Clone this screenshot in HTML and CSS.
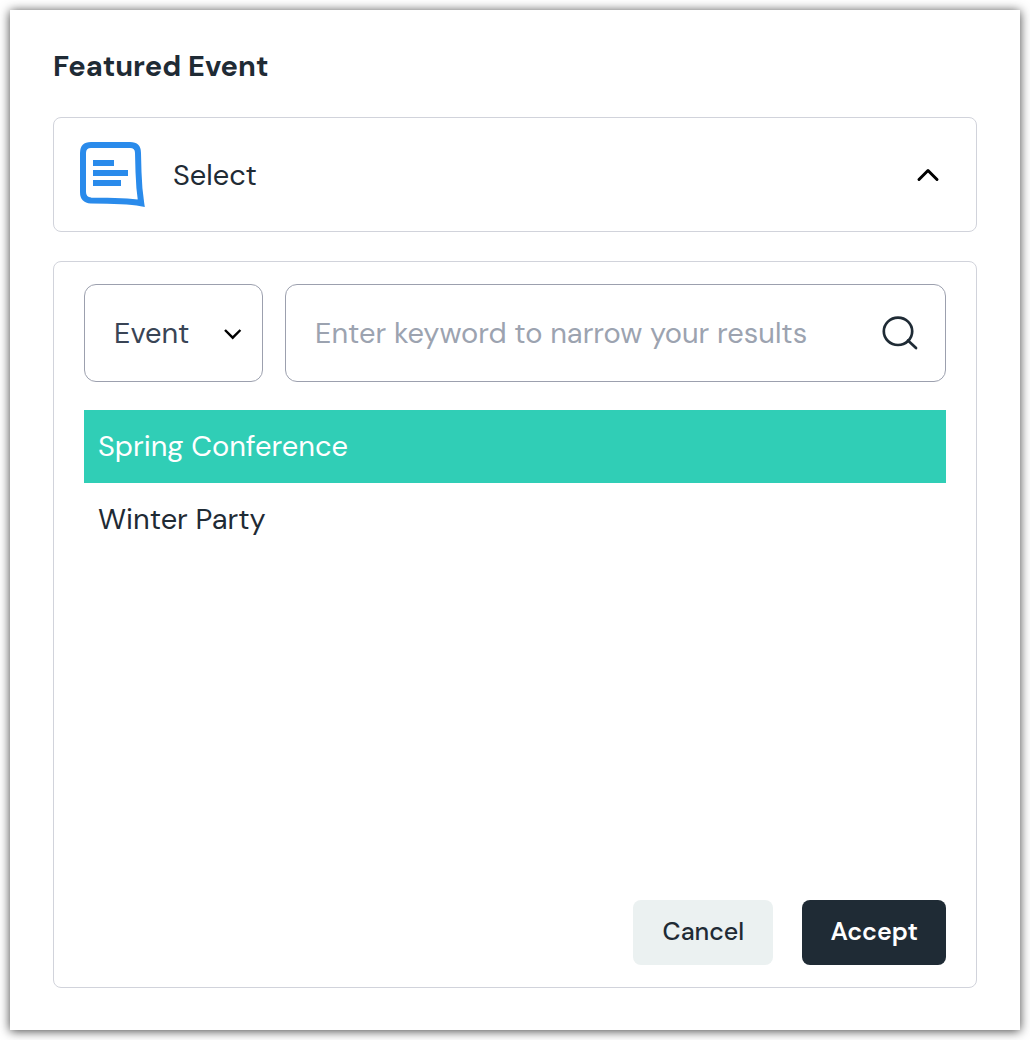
FILE: index.html
```html
<!DOCTYPE html>
<html lang="en">
<head>
<meta charset="utf-8">
<meta name="viewport" content="width=device-width, initial-scale=1">
<title>Featured Event</title>
<link rel="stylesheet" href="styles.css">
</head>
<body>
<main class="card">
  <h1 class="title">Featured Event</h1>
  <button class="picker" type="button" aria-expanded="true" aria-controls="event-panel">
    <svg class="picker-logo" width="66" height="66" viewBox="0 0 66 66" aria-hidden="true">
      <path d="M11 3H50Q58 3 58 11L58.500 30Q59 47 61.200 61.200Q46 58.500 11 58.500Q3 58 3 50V11Q3 3 11 3Z" fill="none" stroke="#2a8beb" stroke-width="6"/>
      <path d="M13 18H34V24H13ZM13 28H48V34H13ZM13 38H41V44H13Z" fill="#2a8beb"/>
    </svg>
    <span class="picker-label">Select</span>
    <svg class="picker-chevron" width="24" height="16" viewBox="0 0 24 16" aria-hidden="true">
      <path d="M3 12.500L12 3.500L21 12.500" fill="none" stroke="#000" stroke-width="3" stroke-linecap="round" stroke-linejoin="round"/>
    </svg>
  </button>

  <section class="panel" id="event-panel" aria-label="Choose an event">
    <div class="filters">
      <div class="type">
        <select class="type-select" aria-label="Content type">
          <option>Event</option>
        </select>
        <svg class="type-chevron" width="18" height="12" viewBox="0 0 18 12" aria-hidden="true">
          <path d="M1 2L8.700 9.700L16.400 2" fill="none" stroke="#000" stroke-width="2.400"/>
        </svg>
      </div>
      <label class="search">
        <input class="search-input" type="text" aria-label="Keyword" placeholder="Enter keyword to narrow your results">
        <svg class="search-icon" width="36" height="34" viewBox="0 0 36 34" aria-hidden="true">
          <ellipse cx="16" cy="15.300" rx="14.200" ry="13.700" fill="none" stroke="#1f2b35" stroke-width="2.700"/>
          <path d="M26 24.500L34 32" fill="none" stroke="#1f2b35" stroke-width="2.700" stroke-linecap="round"/>
        </svg>
      </label>
    </div>
    <ul class="results">
      <li><button class="result result-active" type="button">Spring Conference</button></li>
      <li><button class="result" type="button">Winter Party</button></li>
    </ul>
    <div class="actions">
      <button class="action action-cancel" type="button">Cancel</button>
      <button class="action action-accept" type="button">Accept</button>
    </div>
  </section>
</main>
</body>
</html>
```
FILE: styles.css
```css
* {
  box-sizing: border-box;
}

body {
  margin: 0;
  padding: 10px;
  background: #fff;
  color: #1f2b35;
  font-family: "DM Sans", Inter, "Liberation Sans", sans-serif;
  font-size: 29px;
  line-height: 36px;
}

button,
input,
select {
  font: inherit;
  color: inherit;
}

button {
  cursor: pointer;
}

.card {
  padding: 38px 43px 42px;
  background: #fff;
  box-shadow: 0 1px 10px rgba(0, 0, 0, 0.75);
}

.title {
  margin: 0 0 33px;
  font-size: 29px;
  font-weight: 700;
}

.picker {
  display: flex;
  align-items: center;
  width: 100%;
  height: 115px;
  padding: 0 36px 0 26px;
  border: 1px solid #d1d3db;
  border-radius: 8px;
  background: #fff;
  text-align: left;
}

.picker-label {
  flex: 1;
  margin-left: 27px;
}

.panel {
  display: flex;
  flex-direction: column;
  margin-top: 29px;
  padding: 22px 30px;
  border: 1px solid #d1d3db;
  border-radius: 8px;
}

.filters {
  display: flex;
  gap: 22px;
  height: 98px;
}

.type {
  position: relative;
  flex: none;
  width: 179px;
}

.type-select {
  width: 100%;
  height: 100%;
  padding: 0 48px 0 29px;
  border: 1px solid #9ca0ae;
  border-radius: 12px;
  appearance: none;
  background: transparent;
  color: #394455;
}

.type-chevron {
  position: absolute;
  top: 44px;
  right: 21px;
  pointer-events: none;
}

.search {
  display: flex;
  flex: 1;
  align-items: center;
  min-width: 0;
  padding: 0 27px 0 29px;
  border: 1px solid #9ca0ae;
  border-radius: 12px;
}

.search-input {
  flex: 1;
  min-width: 0;
  padding: 0;
  border: 0;
  outline: 0;
  background: transparent;
}

.search-input::placeholder {
  color: #9ca3b0;
  opacity: 1;
}

.results {
  min-height: 490px;
  margin: 28px 0 0;
  padding: 0;
  list-style: none;
}

.result {
  display: block;
  width: 100%;
  height: 73px;
  padding: 0 14px 2px;
  border: 0;
  background: transparent;
  text-align: left;
}

.result-active {
  background: #30ceb6;
  color: #fff;
}

.actions {
  display: flex;
  justify-content: flex-end;
  gap: 29px;
}

.action {
  height: 65px;
  min-width: 140px;
  padding: 0 28px 2px;
  border: 0;
  border-radius: 8px;
  font-size: 25px;
  font-weight: 500;
}

.action-cancel {
  background: #ebf1f1;
}

.action-accept {
  background: #1f2b35;
  color: #fff;
  font-weight: 600;
}
```
